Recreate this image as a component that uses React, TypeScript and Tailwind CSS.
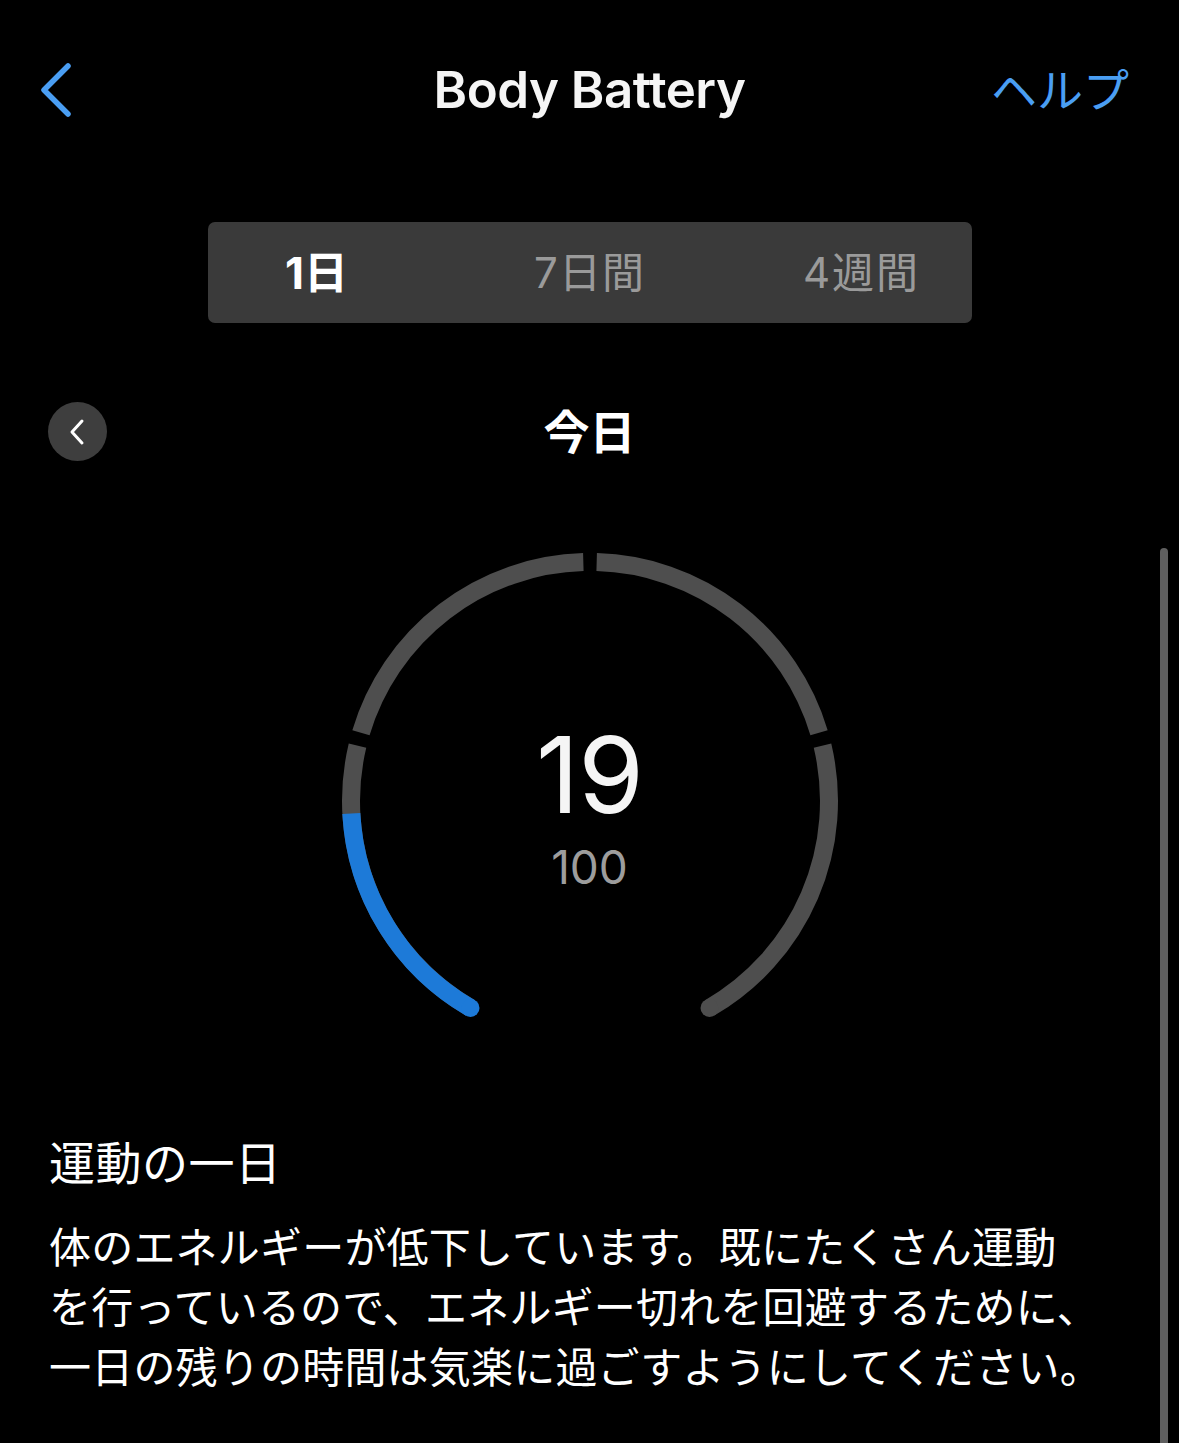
import React from 'react';

const JP = { fontFamily: 'Inter, "Noto Sans CJK JP", sans-serif' };

// gauge geometry (svg coords)
const CX = 250;
const CY = 256;
const R = 239;
const STROKE = 18;

function pt(deg: number) {
  const a = (deg * Math.PI) / 180;
  return { x: CX + R * Math.sin(a), y: CY - R * Math.cos(a) };
}

function arc(from: number, to: number) {
  const s = pt(from);
  const e = pt(to);
  const large = to - from > 180 ? 1 : 0;
  return `M ${s.x} ${s.y} A ${R} ${R} 0 ${large} 1 ${e.x} ${e.y}`;
}

function Gauge({ value }: { value: number }) {
  const start = -150;
  const end = 150;
  const gap = 1.6;
  const level = start + (300 * value) / 100;
  const segs = [
    [start, -75 - gap],
    [-75 + gap, 0 - gap],
    [0 + gap, 75 - gap],
    [75 + gap, end],
  ];
  const s = pt(start);
  const e = pt(end);

  return (
    <div className="relative w-[500px] h-[480px]">
      <svg width="500" height="480" viewBox="0 0 500 480">
        {segs.map(([a, b], i) => (
          <path key={i} d={arc(a, b)} fill="none" stroke="#4e4e4e" strokeWidth={STROKE} />
        ))}
        <path d={arc(start, level)} fill="none" stroke="#1d7ad8" strokeWidth={STROKE} />
        <circle cx={s.x} cy={s.y} r={STROKE / 2} fill="#1d7ad8" />
        <circle cx={e.x} cy={e.y} r={STROKE / 2} fill="#4e4e4e" />
      </svg>
      <div className="absolute inset-0 flex flex-col items-center pt-[177px]">
        <div className="text-[106px] leading-none text-[#f5f5f5] font-normal tracking-[-1px]" style={JP}>
          {value}
        </div>
        <div className="mt-[16px] text-[46px] leading-none text-[#9d9d9d]" style={JP}>
          100
        </div>
      </div>
    </div>
  );
}

export default function App() {
  return (
    <div className="relative w-full min-h-[1443px] bg-black text-white overflow-hidden" style={JP}>
      {/* ---------- HEADER ---------- */}
      <header className="grid grid-cols-[1fr_auto_1fr] items-center h-[80px] mt-[50px] pl-[38px] pr-[50px]">
        <svg width="40" height="60" viewBox="0 0 40 60" fill="none">
          <path d="M30 6 L6 30 L30 54" stroke="#4a9ef3" strokeWidth="5.5" strokeLinecap="round" strokeLinejoin="round" />
        </svg>
        <h1 className="text-[51px] font-semibold text-[#f5f5f5] tracking-[-0.5px] pl-[12px]">Body Battery</h1>
        <span className="justify-self-end text-[46px] text-[#4a9ef3]">ヘルプ</span>
      </header>

      {/* ---------- RANGE TABS ---------- */}
      <div className="mt-[92px] mx-auto w-[764px] h-[101px] rounded-[7px] bg-[#3a3a3a] flex items-center justify-center text-[42px]">
        <span className="w-[272px] shrink-0 text-center font-bold text-white text-[44px] pr-[2px]">1日</span>
        <span className="w-[272px] shrink-0 text-center text-[#9a9a9a] tracking-[1px]">7日間</span>
        <span className="w-[272px] shrink-0 text-center text-[#9a9a9a] tracking-[2px]">4週間</span>
      </div>

      {/* ---------- DAY NAV ---------- */}
      <div className="relative mt-[79px] h-[59px] flex items-center justify-center">
        <button className="absolute left-[48px] top-0 w-[59px] h-[59px] rounded-full bg-[#3e3e3e] flex items-center justify-center">
          <svg width="20" height="28" viewBox="0 0 20 28" fill="none">
            <path d="M14 3 L4 14 L14 25" stroke="white" strokeWidth="3" strokeLinecap="round" strokeLinejoin="round" />
          </svg>
        </button>
        <span className="text-[46px] font-bold pt-[2px]">今日</span>
      </div>

      {/* ---------- GAUGE ---------- */}
      <div className="mt-[84px] flex justify-center">
        <Gauge value={19} />
      </div>

      {/* ---------- MESSAGE ---------- */}
      <section className="mt-[108px] px-[49px]">
        <h2 className="text-[46px] leading-[60px] font-normal tracking-[0.5px]">運動の一日</h2>
        <p className="mt-[25px] text-[42px] leading-[60px] tracking-[0.2px]">
          体のエネルギーが低下しています。既にたくさん運動
          <br />
          を行っているので、エネルギー切れを回避するために、
          <br />
          一日の残りの時間は気楽に過ごすようにしてください。
        </p>
      </section>

      {/* scroll indicator */}
      <div className="absolute right-[11px] top-[548px] bottom-0 w-[8px] rounded-t-full bg-[#5f5f5f]" />
    </div>
  );
}
